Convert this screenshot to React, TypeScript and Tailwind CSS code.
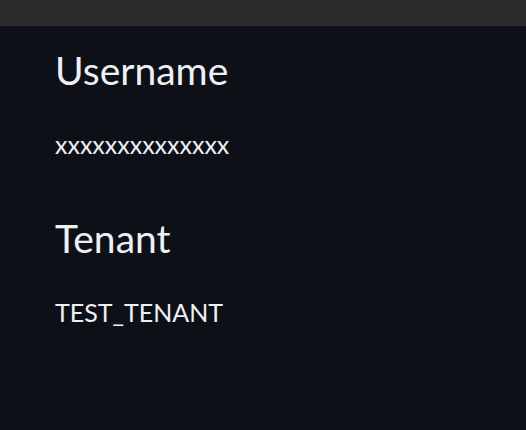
export default function App() {
  return (
    <div className="min-h-[430px] w-full bg-[#0d1117] font-['Lato',sans-serif] text-[#eef0f6]">
      {/* top bar */}
      <div className="h-[26px] w-full bg-[#2b2b2b]" />

      <div className="flex flex-col pl-[55px] pt-[20px]">
        <h2 className="text-[39px] leading-[48px]">Username</h2>
        <p className="mt-[34px] text-[25px] leading-[32px]">xxxxxxxxxxxxxx</p>

        <h2 className="mt-[54px] text-[39px] leading-[48px]">Tenant</h2>
        <p className="mt-[34px] text-[25px] leading-[32px]">TEST_TENANT</p>
      </div>
    </div>
  );
}
